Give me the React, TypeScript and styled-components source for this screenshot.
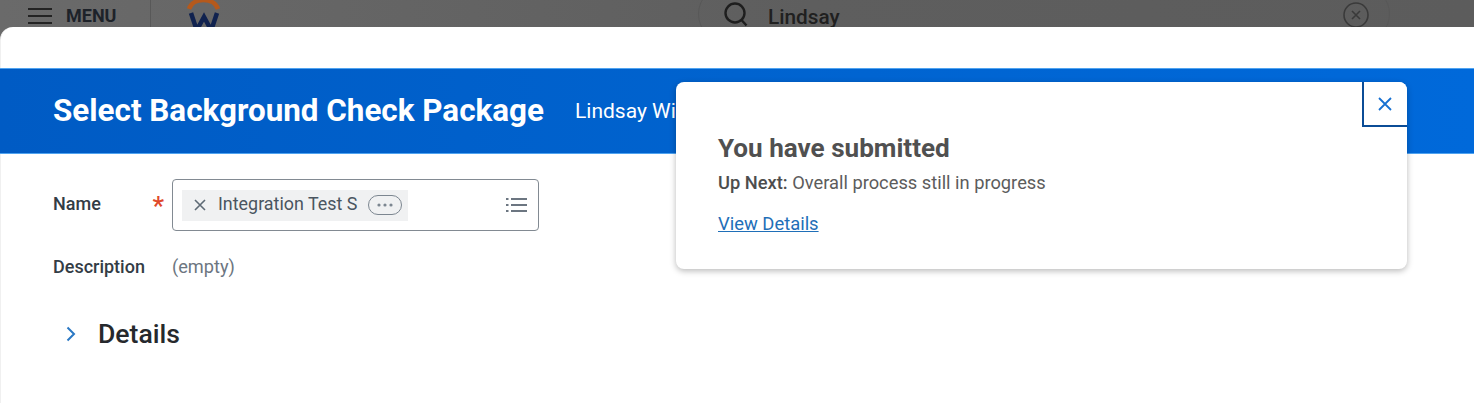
import styled, { createGlobalStyle } from 'styled-components';

const GlobalStyle = createGlobalStyle`
	html, body {
		margin: 0;
		padding: 0;
		background: #ffffff;
	}
	body {
		font-family: Roboto, "Liberation Sans", sans-serif;
	}
`;

function App() {
	return (
		<Page>
			<GlobalStyle />
			<TopBar>
				<MenuButton>
					<svg width="26" height="18" viewBox="0 0 26 18" fill="none" stroke="#232323" strokeWidth="2.2">
						<path d="M1 2h24M1 9h24M1 16h24" />
					</svg>
					<MenuLabel>MENU</MenuLabel>
				</MenuButton>
				<Logo>
					<svg width="34" height="30" viewBox="0 0 34 30" fill="none">
						<path d="M2 9C4 3 10 0 16.5 0s12.5 3 14.5 9" stroke="#b5591c" strokeWidth="4.5" />
						<path d="M4 13l5 15h2l6-11 6 11h2l5-15" stroke="#10224f" strokeWidth="4.5" />
					</svg>
				</Logo>
				<SearchBox>
					<svg width="28" height="28" viewBox="0 0 28 28" fill="none" stroke="#1e1e1e" strokeWidth="2.4">
						<circle cx="13" cy="12" r="9.5" />
						<path d="M19.5 19l5 5.5" />
					</svg>
					<SearchText>Lindsay</SearchText>
					<ClearIcon>
						<svg width="28" height="28" viewBox="0 0 28 28" fill="none" stroke="#3a3a3a" strokeWidth="1.6">
							<circle cx="14" cy="14" r="12" />
							<path d="M10 10l8 8M18 10l-8 8" />
						</svg>
					</ClearIcon>
				</SearchBox>
			</TopBar>
			<Sheet>
				<Banner>
					<Title>Select Background Check Package</Title>
					<Subtitle>Lindsay Williams</Subtitle>
				</Banner>
				<Body>
					<FieldRow>
						<LabelCell $raised>
							<FieldLabel>Name</FieldLabel>
							<Required>*</Required>
						</LabelCell>
						<InputBox>
							<Pill>
								<svg width="12" height="12" viewBox="0 0 12 12" fill="none" stroke="#5e6a75" strokeWidth="1.6">
									<path d="M1 1l10 10M11 1L1 11" />
								</svg>
								<PillText>Integration Test S</PillText>
								<MoreBadge>
									<svg width="18" height="4" viewBox="0 0 18 4" fill="#7c8690">
										<circle cx="3" cy="2" r="1.6" />
										<circle cx="9" cy="2" r="1.6" />
										<circle cx="15" cy="2" r="1.6" />
									</svg>
								</MoreBadge>
							</Pill>
							<svg width="21" height="16" viewBox="0 0 21 16" fill="none" stroke="#6c7681" strokeWidth="2">
								<path d="M5 2h16M5 8h16M5 14h16M0 2h2.5M0 8h2.5M0 14h2.5" />
							</svg>
						</InputBox>
					</FieldRow>
					<DescriptionRow>
						<LabelCell>
							<FieldLabel>Description</FieldLabel>
						</LabelCell>
						<EmptyValue>(empty)</EmptyValue>
					</DescriptionRow>
					<DetailsRow>
						<svg width="10" height="16" viewBox="0 0 10 16" fill="none" stroke="#2a78c4" strokeWidth="2">
							<path d="M1.5 1.5L8 8l-6.5 6.5" />
						</svg>
						<DetailsTitle>Details</DetailsTitle>
					</DetailsRow>
				</Body>
			</Sheet>
			<Toast>
				<CloseButton>
					<svg width="14" height="14" viewBox="0 0 14 14" fill="none" stroke="#1670d2" strokeWidth="1.8">
						<path d="M1 1l12 12M13 1L1 13" />
					</svg>
				</CloseButton>
				<ToastTitle>You have submitted</ToastTitle>
				<ToastLine>
					<strong>Up Next:</strong> Overall process still in progress
				</ToastLine>
				<ToastLink>View Details</ToastLink>
			</Toast>
		</Page>
	);
}

export default App;

const Page = styled.div`
	width: 1474px;
	height: 403px;
	position: relative;
	overflow: hidden;
	background: linear-gradient(90deg, #6a6a6a 0%, #5e5e5e 55%, #5c5c5c 100%);
`;

const TopBar = styled.div`
	height: 27px;
	display: flex;
	overflow: hidden;
`;

const MenuButton = styled.div`
	width: 151px;
	height: 31px;
	box-sizing: border-box;
	padding-left: 27px;
	display: flex;
	align-items: center;
	gap: 13px;
	border-right: 1px solid #585858;
	flex: none;
`;

const MenuLabel = styled.span`
	font-size: 18px;
	font-weight: 700;
	color: #1d2229;
	margin-top: -1px;
`;

const Logo = styled.div`
	margin-left: 36px;
	width: 34px;
	flex: none;
`;

const SearchBox = styled.div`
	margin-left: 477px;
	width: 692px;
	height: 58px;
	margin-top: -15px;
	box-sizing: border-box;
	border: 1px solid #585858;
	border-radius: 29px;
	padding: 15px 19px 0 23px;
	display: flex;
	align-items: flex-start;
	flex: none;
`;

const SearchText = styled.span`
	margin-left: 18px;
	margin-top: 2px;
	font-size: 20.8px;
	font-weight: 500;
	color: #202020;
	line-height: 28px;
	flex: 1;
`;

const ClearIcon = styled.span`
	display: block;
	height: 28px;
`;

const Sheet = styled.div`
	height: 376px;
	background: #ffffff;
	border-radius: 13px 0 0 0;
	padding-top: 41px;
	box-sizing: border-box;
	border-left: 1px solid #f0f0f0;
`;

const Banner = styled.div`
	height: 86px;
	margin-left: -1px;
	box-sizing: border-box;
	border-top: 1px solid #4fa3f0;
	border-bottom: 1px solid #4fa3f0;
	padding: 0 0 2px 53px;
	display: flex;
	align-items: center;
	gap: 31px;
	background: linear-gradient(90deg, #005bc4 0%, #0063cf 50%, #0069da 100%);
	color: #ffffff;
`;

const Title = styled.h1`
	margin: 0;
	font-size: 31.4px;
	font-weight: 700;
	white-space: nowrap;
`;

const Subtitle = styled.span`
	font-size: 21px;
	font-weight: 400;
	white-space: nowrap;
	margin-top: 2px;
`;

const Body = styled.div`
	padding: 25px 0 0 52px;
`;

const FieldRow = styled.div`
	display: flex;
	align-items: center;
`;

const LabelCell = styled.div<{ $raised?: boolean }>`
	width: 119px;
	box-sizing: border-box;
	padding-right: 8px;
	padding-bottom: ${(props) => (props.$raised ? '4px' : '0')};
	flex: none;
	display: flex;
	justify-content: space-between;
	align-items: center;
`;

const FieldLabel = styled.span`
	font-size: 18px;
	font-weight: 500;
	color: #333c45;
`;

const Required = styled.span`
	font-size: 26px;
	font-weight: 500;
	color: #e0492b;
	line-height: 20px;
	margin-top: 6px;
`;

const InputBox = styled.div`
	width: 367px;
	height: 52px;
	box-sizing: border-box;
	border: 1.5px solid #828a92;
	border-radius: 4px;
	padding: 9px 11px 9px 9px;
	display: flex;
	align-items: center;
	justify-content: space-between;
`;

const Pill = styled.div`
	width: 226px;
	height: 31px;
	box-sizing: border-box;
	padding-left: 12px;
	display: flex;
	align-items: center;
	background: #f0f1f2;
`;

const PillText = styled.span`
	margin-left: 12px;
	font-size: 17.9px;
	color: #4a5560;
	white-space: nowrap;
	margin-top: -4px;
`;

const MoreBadge = styled.span`
	margin-left: 11px;
	width: 34px;
	height: 20px;
	box-sizing: border-box;
	border: 1.5px solid #7c8690;
	border-radius: 10px;
	display: flex;
	align-items: center;
	justify-content: center;
`;

const DescriptionRow = styled.div`
	margin-top: 25px;
	display: flex;
	align-items: center;
`;

const EmptyValue = styled.span`
	font-size: 18.2px;
	color: #6c7681;
`;

const DetailsRow = styled.div`
	margin-top: 41px;
	padding-left: 13px;
	display: flex;
	align-items: center;
	gap: 22px;
`;

const DetailsTitle = styled.h2`
	margin: 0;
	font-size: 26.6px;
	font-weight: 500;
	color: #26292d;
`;

const Toast = styled.div`
	position: absolute;
	left: 676px;
	top: 82px;
	width: 731px;
	height: 187px;
	box-sizing: border-box;
	padding: 50px 42px 0;
	background: #ffffff;
	border-radius: 8px;
	box-shadow: 0 2px 6px rgba(0, 0, 0, 0.28);
`;

const CloseButton = styled.div`
	position: absolute;
	top: 0;
	right: 0;
	width: 45px;
	height: 45px;
	box-sizing: border-box;
	padding-right: 2px;
	border-left: 2px solid #0b4c96;
	border-bottom: 2px solid #0b4c96;
	border-radius: 0 8px 0 0;
	background: #ffffff;
	display: flex;
	align-items: center;
	justify-content: center;
`;

const ToastTitle = styled.div`
	font-size: 26.1px;
	font-weight: 700;
	color: #505050;
	line-height: 32px;
`;

const ToastLine = styled.div`
	margin-top: 9px;
	font-size: 18.3px;
	color: #5c5c5c;
	line-height: 20px;

	strong {
		font-weight: 500;
		color: #4d4d4d;
	}
`;

const ToastLink = styled.a`
	display: inline-block;
	margin-top: 20px;
	font-size: 18.4px;
	color: #1f6fb8;
	text-decoration: underline;
	line-height: 22px;
`;
